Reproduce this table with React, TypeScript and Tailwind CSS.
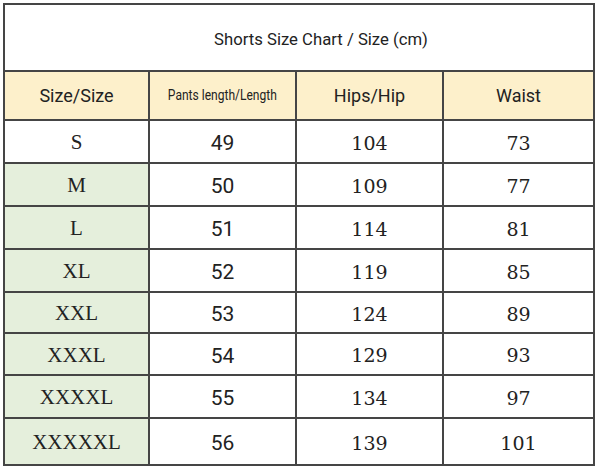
import React from "react";

const rows: [string, string, string, string][] = [
  ["S", "49", "104", "73"],
  ["M", "50", "109", "77"],
  ["L", "51", "114", "81"],
  ["XL", "52", "119", "85"],
  ["XXL", "53", "124", "89"],
  ["XXXL", "54", "129", "93"],
  ["XXXXL", "55", "134", "97"],
  ["XXXXXL", "56", "139", "101"],
];
const heights = ["h-[41px]", "h-[41px]", "h-[41px]", "h-[41px]", "h-[39px]", "h-[40px]", "h-[41px]", "h-[45px]"];

const sans = { fontFamily: "Roboto, 'Liberation Sans', sans-serif" };
const serif = { fontFamily: "'DejaVu Serif', 'Liberation Serif', serif" };
const serif2 = { fontFamily: "'Liberation Serif', 'DejaVu Serif', serif" };

export default function App() {
  return (
    <div className="w-[600px] h-[467px] bg-white pt-[3px] pl-[3px]">
      <div className="w-[592px] bg-[#454545] p-[2px] flex flex-col gap-[2px] text-[#222]">
        <div className="h-[65px] bg-white flex items-center justify-center pt-[5px] pl-[44px] text-[16.7px]" style={sans}>
          Shorts Size Chart / Size (cm)
        </div>
        <div className="grid grid-cols-[143px_145px_145px_149px] gap-[2px] h-[47px]" style={sans}>
          <div className="bg-[#fdf0cb] flex items-center justify-center text-[18px]">Size/Size</div>
          <div className="bg-[#fdf0cb] flex items-center justify-center text-[14px]">
            <span className="inline-block scale-x-[0.86] whitespace-nowrap">Pants length/Length</span>
          </div>
          <div className="bg-[#fdf0cb] flex items-center justify-center text-[18px]">Hips/Hip</div>
          <div className="bg-[#fdf0cb] flex items-center justify-center text-[18px]">Waist</div>
        </div>
        {rows.map((r, i) => (
          <div key={r[0]} className={`grid grid-cols-[143px_145px_145px_149px] gap-[2px] ${heights[i]}`}>
            <div
              className={`${i === 0 ? "bg-white" : "bg-[#e5efdc]"} flex items-center justify-center pt-[3px] text-[21px]`}
              style={serif2}
            >
              {r[0]}
            </div>
            <div className="bg-white flex items-center justify-center pt-[5px] text-[21px]" style={sans}>
              {r[1]}
            </div>
            <div className="bg-white flex items-center justify-center pt-[3px] text-[19px]" style={serif}>
              {r[2]}
            </div>
            <div className="bg-white flex items-center justify-center pt-[3px] text-[19px]" style={serif}>
              {r[3]}
            </div>
          </div>
        ))}
      </div>
    </div>
  );
}
